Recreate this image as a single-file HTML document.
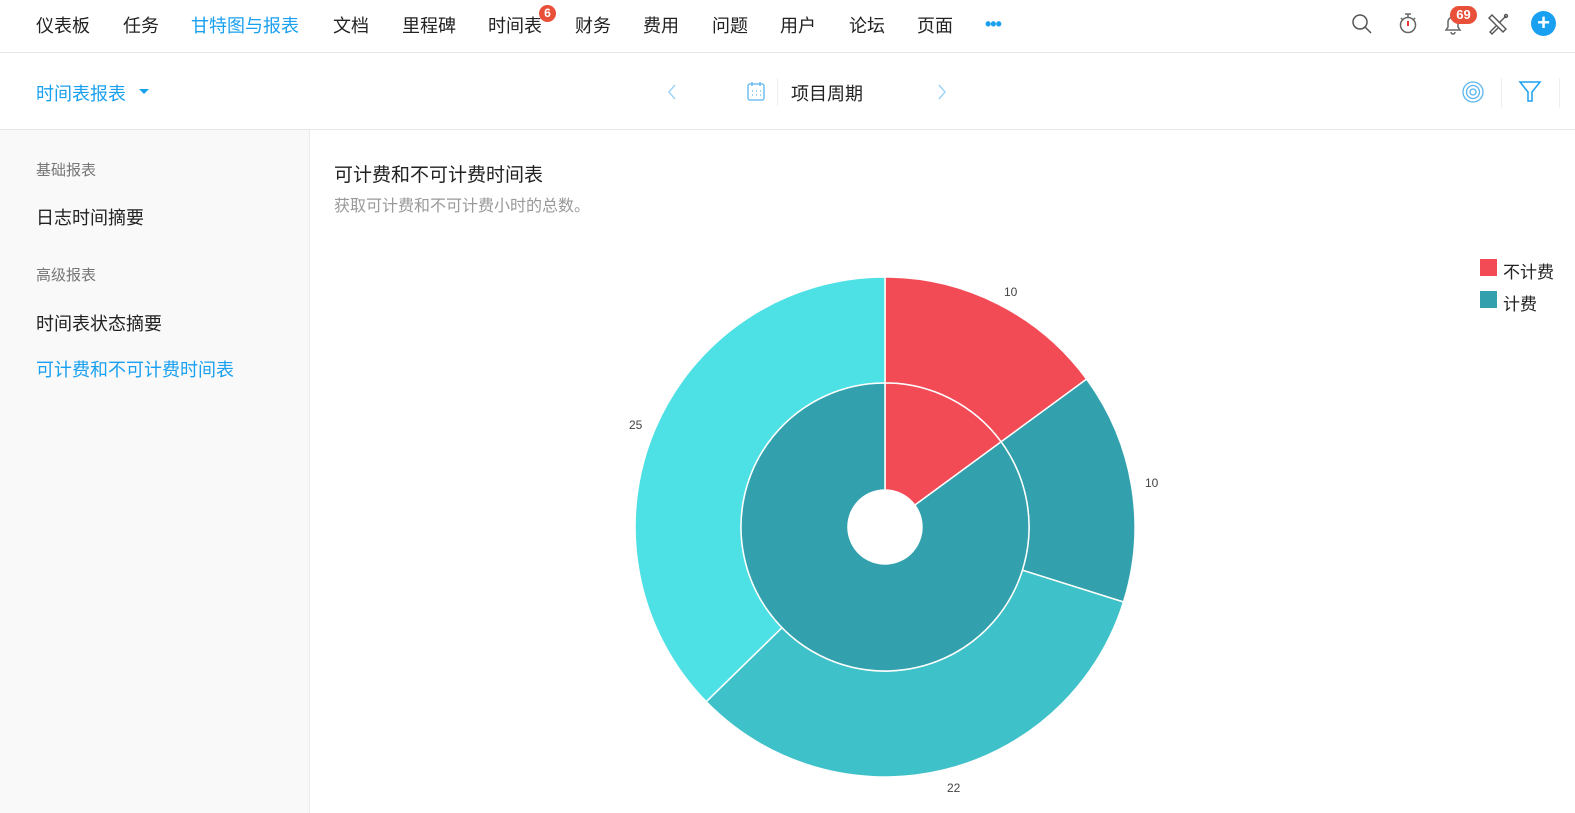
<!DOCTYPE html>
<html><head><meta charset="utf-8"><style>
*{margin:0;padding:0;box-sizing:border-box}
body{width:1575px;height:813px;overflow:hidden;background:#fff;font-family:"Liberation Sans","Noto Sans CJK SC",sans-serif;color:#222;position:relative}
.top{position:absolute;left:0;top:0;width:1575px;height:53px;border-bottom:1px solid #e6e6e6}
.nav{position:absolute;top:12px;font-size:18px;color:#222}
.bar2{position:absolute;left:0;top:53px;width:1575px;height:77px;border-bottom:1px solid #e6e6e6}
.side{position:absolute;left:0;top:130px;width:310px;height:683px;background:#f9f9f9;border-right:1px solid #ececec}
.abs{position:absolute}
</style></head><body>
<div class="top">
<span class="nav" style="left:36px">仪表板</span>
<span class="nav" style="left:123px">任务</span>
<span class="nav" style="left:191px;color:#1aa0f0">甘特图与报表</span>
<span class="nav" style="left:333px">文档</span>
<span class="nav" style="left:402px">里程碑</span>
<span class="nav" style="left:488px">时间表</span>
<span class="abs" style="left:539px;top:5px;width:17px;height:17px;border-radius:9px;background:#e8503a;color:#fff;font-size:12px;text-align:center;line-height:17px;font-weight:bold">6</span>
<span class="nav" style="left:575px">财务</span>
<span class="nav" style="left:643px">费用</span>
<span class="nav" style="left:712px">问题</span>
<span class="nav" style="left:780px">用户</span>
<span class="nav" style="left:849px">论坛</span>
<span class="nav" style="left:917px">页面</span>
<span class="abs" style="left:985px;top:14px;color:#1aa0f0;font-size:18px;font-weight:bold;letter-spacing:-1px">•••</span>
<svg class="abs" style="left:1350px;top:12px" width="24" height="24" viewBox="0 0 24 24" fill="none" stroke="#555" stroke-width="1.5"><circle cx="10" cy="10" r="7"/><path d="M15 15l6 6"/></svg>
<svg class="abs" style="left:1396px;top:11px" width="24" height="24" viewBox="0 0 24 24" fill="none" stroke="#666" stroke-width="1.5"><circle cx="12" cy="14" r="7.5"/><path d="M9 3h6M12 3v3M5 7l2 2M19 7l-2 2"/><path d="M12 10v5" stroke="#e33" stroke-width="2"/></svg>
<svg class="abs" style="left:1441px;top:12px" width="24" height="24" viewBox="0 0 24 24" fill="none" stroke="#666" stroke-width="1.5"><path d="M5 18h14l-2-3V10a5 5 0 0 0-10 0v5zM10 20a2 2 0 0 0 4 0"/></svg>
<span class="abs" style="left:1450px;top:6px;width:27px;height:18px;border-radius:9px;background:#e8503a;color:#fff;font-size:13px;font-weight:bold;text-align:center;line-height:18px">69</span>
<svg class="abs" style="left:1486px;top:12px" width="24" height="24" viewBox="0 0 24 24" fill="none" stroke="#555" stroke-width="1.4"><path d="M3 6l3-3 14 14-3 3z"/><path d="M20 4l-7 7M10 14l-6 6 2 2 6-6"/><circle cx="20" cy="4" r="1.5"/></svg>
<span class="abs" style="left:1531px;top:11px;width:25px;height:25px;border-radius:50%;background:#1aa0f0;color:#fff;font-size:22px;text-align:center;line-height:24px;font-weight:bold">+</span>
</div>
<div class="bar2">
<span class="abs" style="left:36px;top:27px;font-size:18px;color:#1aa0f0">时间表报表</span>
<span class="abs" style="left:139px;top:36px;border-left:5px solid transparent;border-right:5px solid transparent;border-top:5px solid #1aa0f0"></span>
<svg class="abs" style="left:665px;top:29px" width="14" height="20" viewBox="0 0 14 20" fill="none" stroke="#9fd4f7" stroke-width="1.5"><path d="M10 3L4 10l6 7"/></svg>
<svg class="abs" style="left:746px;top:27px" width="20" height="22" viewBox="0 0 20 22" fill="none" stroke="#5ab4ef" stroke-width="1.3"><rect x="2" y="4" width="16" height="16" rx="2"/><path d="M6 2v4M14 2v4"/><path d="M6 11h1M10 11h1M14 11h1M6 15h1M10 15h1M14 15h1"/></svg>
<div class="abs" style="left:777px;top:25px;width:1px;height:28px;background:#eee"></div>
<span class="abs" style="left:791px;top:27px;font-size:18px">项目周期</span>
<svg class="abs" style="left:935px;top:29px" width="14" height="20" viewBox="0 0 14 20" fill="none" stroke="#9fd4f7" stroke-width="1.5"><path d="M4 3l6 7-6 7"/></svg>
<svg class="abs" style="left:1460px;top:26px" width="26" height="26" viewBox="0 0 26 26" fill="none" stroke="#5ab4ef" stroke-width="1.3"><circle cx="13" cy="13" r="10"/><circle cx="13" cy="13" r="6.5"/><circle cx="13" cy="13" r="3"/></svg>
<div class="abs" style="left:1501px;top:25px;width:1px;height:30px;background:#eee"></div>
<svg class="abs" style="left:1518px;top:26px" width="24" height="26" viewBox="0 0 24 26" fill="none" stroke="#1aa0f0" stroke-width="1.5"><path d="M2 3h20l-8 10v9h-4v-9z"/></svg>
<div class="abs" style="left:1559px;top:25px;width:1px;height:30px;background:#eee"></div>
</div>
<div class="side">
<span class="abs" style="left:36px;top:29px;font-size:15px;color:#777">基础报表</span>
<span class="abs" style="left:36px;top:74px;font-size:18px">日志时间摘要</span>
<span class="abs" style="left:36px;top:134px;font-size:15px;color:#777">高级报表</span>
<span class="abs" style="left:36px;top:180px;font-size:18px">时间表状态摘要</span>
<span class="abs" style="left:36px;top:226px;font-size:18px;color:#1aa0f0">可计费和不可计费时间表</span>
</div>
<span class="abs" style="left:334px;top:160px;font-size:19px">可计费和不可计费时间表</span>
<span class="abs" style="left:334px;top:192px;font-size:16px;color:#999">获取可计费和不可计费小时的总数。</span>
<span class="abs" style="left:1480px;top:259px;width:17px;height:17px;background:#f24b55"></span>
<span class="abs" style="left:1503px;top:258px;font-size:17px">不计费</span>
<span class="abs" style="left:1480px;top:291px;width:17px;height:17px;background:#33a1ad"></span>
<span class="abs" style="left:1503px;top:290px;font-size:17px">计费</span>
<svg class="abs" style="left:0;top:0" width="1575" height="813">
<g stroke="#fff" stroke-width="1.5">
<path d="M885 277A250 250 0 0 1 1086.6 379.1L1001.1 441.8A144 144 0 0 0 885 383Z" fill="#f24b55"/>
<path d="M1086.6 379.1A250 250 0 0 1 1123.5 602L1022.4 570.2A144 144 0 0 0 1001.1 441.8Z" fill="#33a1ad"/>
<path d="M1123.5 602A250 250 0 0 1 706.2 701.7L782 627.6A144 144 0 0 0 1022.4 570.2Z" fill="#3ec1c8"/>
<path d="M706.2 701.7A250 250 0 0 1 885 277L885 383A144 144 0 0 0 782 627.6Z" fill="#4de0e4"/>
<path d="M885 383A144 144 0 0 1 1001.1 441.8L914.8 505.1A37 37 0 0 0 885 490Z" fill="#f24b55"/>
<path d="M1001.1 441.8A144 144 0 1 1 885 383L885 490A37 37 0 1 0 914.8 505.1Z" fill="#33a1ad"/>
</g>
<g font-size="12" fill="#444" font-family="Liberation Sans,sans-serif">
<text x="1004" y="296">10</text><text x="1145" y="487">10</text><text x="947" y="792">22</text><text x="629" y="429">25</text>
</g>
</svg>
</body></html>
